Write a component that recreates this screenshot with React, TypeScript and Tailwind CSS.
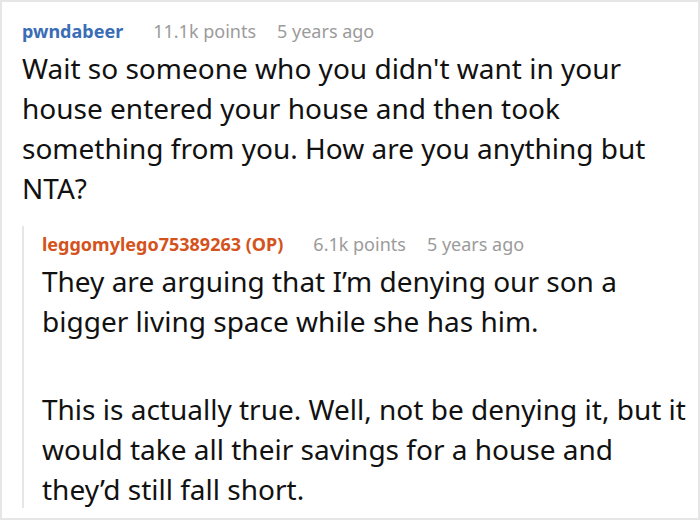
import React from "react";

const Meta = ({ name, color, points, age }: { name: string; color: string; points: string; age: string }) => (
  <div className="flex items-baseline text-[18px] leading-[26px]">
    <span className={`font-bold ${color}`}>{name}</span>
    <span className="ml-[30px] text-[#9b9b9b]">{points}</span>
    <span className="ml-[21px] text-[#9b9b9b]">{age}</span>
  </div>
);

export default function App() {
  return (
    <div
      className="w-[700px] h-[520px] overflow-hidden border-2 border-[#e6e6e6] bg-white pl-[20px] pt-[16px]"
      style={{ fontFamily: "'Noto Sans', 'Open Sans', sans-serif" }}
    >
      <Meta name="pwndabeer" color="text-[#3a6db5]" points="11.1k points" age="5 years ago" />
      <p className="mt-[4px] text-[28px] leading-[40px] text-[#111] w-[650px]">
        Wait so someone who you didn't want in your house entered your house and then took something from you. How are you anything but NTA?
      </p>
      <div className="mt-[18px] border-l-2 border-[#e6e6e6] pl-[18px] pt-[5px] h-[282px]">
        <Meta name="leggomylego75389263 (OP)" color="text-[#d4521b]" points="6.1k points" age="5 years ago" />
        <div className="mt-[4px] text-[28px] leading-[40px] text-[#111] w-[652px]">
          <p>They are arguing that I’m denying our son a bigger living space while she has him.</p>
          <p className="mt-[48px]">This is actually true. Well, not be denying it, but it would take all their savings for a house and they’d still fall short.</p>
        </div>
      </div>
    </div>
  );
}
